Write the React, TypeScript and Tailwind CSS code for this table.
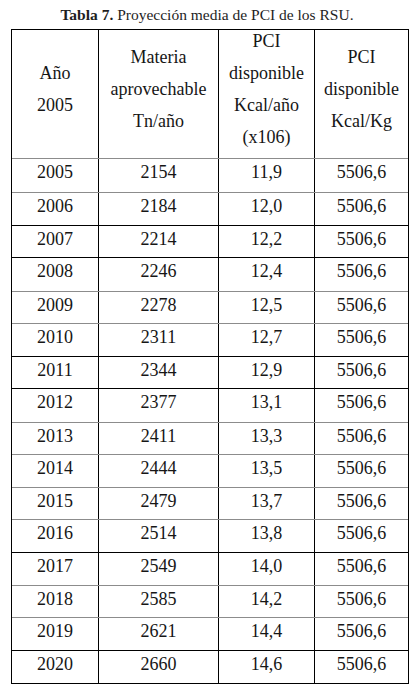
const rows = [
  { year: '2005', tn: '2154', pci: '11,9', h: 'h-[34px]', line: 'border-[#8c8c8c]' },
  { year: '2006', tn: '2184', pci: '12,0', h: 'h-[33px]', line: 'border-black' },
  { year: '2007', tn: '2214', pci: '12,2', h: 'h-[32px]', line: 'border-black' },
  { year: '2008', tn: '2246', pci: '12,4', h: 'h-[34px]', line: 'border-[#8c8c8c]' },
  { year: '2009', tn: '2278', pci: '12,5', h: 'h-[32px]', line: 'border-[#8c8c8c]' },
  { year: '2010', tn: '2311', pci: '12,7', h: 'h-[33px]', line: 'border-black' },
  { year: '2011', tn: '2344', pci: '12,9', h: 'h-[32px]', line: 'border-black' },
  { year: '2012', tn: '2377', pci: '13,1', h: 'h-[34px]', line: 'border-[#8c8c8c]' },
  { year: '2013', tn: '2411', pci: '13,3', h: 'h-[32px]', line: 'border-[#8c8c8c]' },
  { year: '2014', tn: '2444', pci: '13,5', h: 'h-[33px]', line: 'border-[#8c8c8c]' },
  { year: '2015', tn: '2479', pci: '13,7', h: 'h-[32px]', line: 'border-[#8c8c8c]' },
  { year: '2016', tn: '2514', pci: '13,8', h: 'h-[33px]', line: 'border-black' },
  { year: '2017', tn: '2549', pci: '14,0', h: 'h-[33px]', line: 'border-[#8c8c8c]' },
  { year: '2018', tn: '2585', pci: '14,2', h: 'h-[32px]', line: 'border-[#8c8c8c]' },
  { year: '2019', tn: '2621', pci: '14,4', h: 'h-[33px]', line: 'border-black' },
  { year: '2020', tn: '2660', pci: '14,6', h: 'h-[33px]', line: 'border-black' },
];

const grid = 'grid grid-cols-[86px_120px_96px_94px]';

function HeaderCell({ lines, first }: { lines: string[]; first?: boolean }) {
  return (
    <div
      className={`flex flex-col items-center justify-center gap-[12px] pb-[10px] leading-[20px] ${
        first ? '' : 'border-l border-black'
      }`}
    >
      {lines.map((l) => (
        <span key={l}>{l}</span>
      ))}
    </div>
  );
}

function Cell({ children, first }: { children: React.ReactNode; first?: boolean }) {
  return (
    <div
      className={`flex justify-center pt-[3px] leading-[20px] ${first ? '' : 'border-l border-black'}`}
    >
      {children}
    </div>
  );
}

export default function App() {
  return (
    <div className="w-[414px] h-[693px] bg-white text-[#161616] overflow-hidden font-['Liberation_Serif','DejaVu_Serif',serif]">
      <div className="pt-[5px] text-center text-[15.5px] leading-[20px] text-[#1e1e1e]">
        <span className="font-bold">Tabla 7.</span> Proyección media de PCI de los RSU.
      </div>

      <div className="ml-[11px] mt-[4px] w-[398px] border-l border-r border-t border-black text-[18px]">
        <div className={`${grid} h-[129px] border-b border-[#8c8c8c]`}>
          <HeaderCell first lines={['Año', '2005']} />
          <HeaderCell lines={['Materia', 'aprovechable', 'Tn/año']} />
          <HeaderCell lines={['PCI', 'disponible', 'Kcal/año', '(x106)']} />
          <HeaderCell lines={['PCI', 'disponible', 'Kcal/Kg']} />
        </div>

        {rows.map((r) => (
          <div key={r.year} className={`${grid} ${r.h} border-b ${r.line}`}>
            <Cell first>{r.year}</Cell>
            <Cell>{r.tn}</Cell>
            <Cell>{r.pci}</Cell>
            <Cell>5506,6</Cell>
          </div>
        ))}
      </div>
    </div>
  );
}
